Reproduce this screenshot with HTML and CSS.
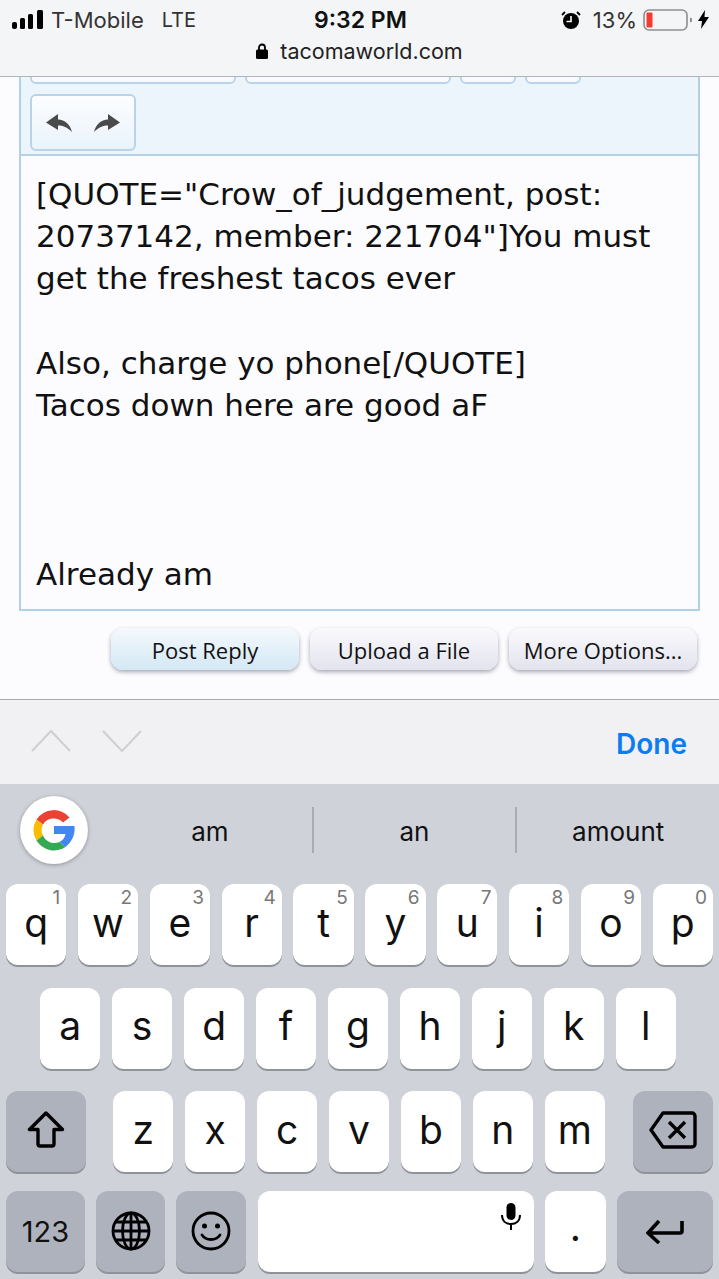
FILE: index.html
```html
<!DOCTYPE html>
<html lang="en">
<head>
  <meta charset="UTF-8">
  <meta name="viewport" content="width=device-width, initial-scale=1.0">
  <title>Post Reply - tacomaworld.com</title>
  <link rel="stylesheet" href="styles.css">
</head>
<body>
<div class="phone">
  <header class="top-bar">
    <div class="status-row">
      <div class="status-left">
        <svg class="signal" width="32" height="20" viewBox="0 0 32 20">
          <rect x="0" y="12" width="5" height="7" rx="2" fill="#000"/>
          <rect x="8" y="8" width="5" height="11" rx="1.5" fill="#000"/>
          <rect x="16" y="4" width="5" height="15" rx="1.5" fill="#000"/>
          <rect x="25" y="0" width="6" height="19" rx="1.5" fill="#000"/>
        </svg>
        <span class="carrier">T-Mobile</span>
        <span class="network">LTE</span>
      </div>
      <div class="clock">9:32 PM</div>
      <div class="status-right">
        <svg class="alarm" width="20" height="20" viewBox="0 0 20 20">
          <circle cx="10" cy="11" r="8" fill="#000"/>
          <path d="M10 6v5.5H5.5" fill="none" stroke="#fff" stroke-width="1.6"/>
          <path d="M1 5l3-3M19 5l-3-3" stroke="#000" stroke-width="1.8" fill="none"/>
        </svg>
        <span class="percent">13%</span>
        <svg class="battery" width="50" height="22" viewBox="0 0 50 22">
          <rect x="1" y="1" width="43" height="20" rx="5" fill="none" stroke="#8e8e8e" stroke-width="1.6"/>
          <rect x="3.5" y="3.5" width="6" height="15" rx="1" fill="#f63a30"/>
          <path d="M47 8.5l2 1v3l-2 1z" fill="#8e8e8e"/>
        </svg>
        <svg class="bolt" width="11" height="19" viewBox="0 0 11 19">
          <path d="M7 0L0 11h4l-1 8 8-12H6.500z" fill="#000"/>
        </svg>
      </div>
    </div>
    <div class="url-row">
      <svg class="lock" width="12" height="16" viewBox="0 0 12 16">
        <path d="M3 7V4.500a3 3 0 0 1 6 0V7" fill="none" stroke="#000" stroke-width="1.800"/>
        <rect x="0" y="6.500" width="12" height="9.500" rx="1.500" fill="#000"/>
      </svg>
      <span>tacomaworld.com</span>
    </div>
  </header>

  <main class="page">
    <div class="editor">
      <div class="toolbar">
        <div class="tool-row-clipped">
          <div class="tool-group group-wide"></div>
          <div class="tool-group group-wide"></div>
          <div class="tool-group group-small"></div>
          <div class="tool-group group-small"></div>
        </div>
        <div class="tool-group undo-group">
          <svg width="30" height="20" viewBox="0 0 30 20">
            <path d="M13 1L1 9.500 13 17v-4.500c5 0 9 1.500 14 6.500-2-8-7-12-14-12.500z" fill="#4a4a4a"/>
          </svg>
          <svg width="30" height="20" viewBox="0 0 30 20">
            <path d="M17 1l12 8.500L17 17v-4.500c-5 0-9 1.500-14 6.500 2-8 7-12 14-12.500z" fill="#4a4a4a"/>
          </svg>
        </div>
      </div>
      <div class="editor-text">[QUOTE="Crow_of_judgement, post:
20737142, member: 221704"]You must
get the freshest tacos ever

Also, charge yo phone[/QUOTE]
Tacos down here are good aF



Already am</div>
    </div>
    <div class="form-buttons">
      <div class="form-button primary">Post Reply</div>
      <div class="form-button">Upload a File</div>
      <div class="form-button">More Options...</div>
    </div>
  </main>

  <div class="accessory-bar">
    <div class="chevrons">
      <svg width="40" height="23" viewBox="0 0 40 23"><path d="M1 22L20 2l19 20" fill="none" stroke="#cfcfd2" stroke-width="2"/></svg>
      <svg width="40" height="23" viewBox="0 0 40 23"><path d="M1 2l19 20L39 2" fill="none" stroke="#cfcfd2" stroke-width="2"/></svg>
    </div>
    <div class="done">Done</div>
  </div>

  <section class="keyboard">
    <div class="suggestions">
      <div class="google-badge">
        <svg width="44" height="44" viewBox="0 0 44 44">
          <path d="M37.500 9.500A20.500 20.500 0 0 0 4.500 11.500l6.500 5a12.500 12.500 0 0 1 20-2z" fill="#ea4335"/>
          <path d="M4.500 11.500a20.500 20.500 0 0 0 0 21l6.500-5a12.500 12.500 0 0 1 0-11z" fill="#fbbc05"/>
          <path d="M4.500 32.500a20.500 20.500 0 0 0 29 6.500l-6-5a12.500 12.500 0 0 1-16.500-6.500z" fill="#34a853"/>
          <path d="M42.500 18H22v8h11.500a11 11 0 0 1-6 8l6 5c6-5 10-12 9-21z" fill="#4285f4"/>
        </svg>
      </div>
      <div class="suggestion">am</div>
      <div class="suggestion">an</div>
      <div class="suggestion">amount</div>
    </div>

    <div class="key-row">
      <div class="key">q<span class="hint">1</span></div>
      <div class="key">w<span class="hint">2</span></div>
      <div class="key">e<span class="hint">3</span></div>
      <div class="key">r<span class="hint">4</span></div>
      <div class="key">t<span class="hint">5</span></div>
      <div class="key">y<span class="hint">6</span></div>
      <div class="key">u<span class="hint">7</span></div>
      <div class="key">i<span class="hint">8</span></div>
      <div class="key">o<span class="hint">9</span></div>
      <div class="key">p<span class="hint">0</span></div>
    </div>

    <div class="key-row row-home">
      <div class="key">a</div>
      <div class="key">s</div>
      <div class="key">d</div>
      <div class="key">f</div>
      <div class="key">g</div>
      <div class="key">h</div>
      <div class="key">j</div>
      <div class="key">k</div>
      <div class="key">l</div>
    </div>

    <div class="key-row">
      <div class="key dark key-shift">
        <svg width="38" height="38" viewBox="0 0 38 38">
          <path d="M19 2L2.500 18.500H11V33a2 2 0 0 0 2 2h12a2 2 0 0 0 2-2V18.500h8.500z" fill="none" stroke="#000" stroke-width="3.400" stroke-linejoin="round"/>
        </svg>
      </div>
      <div class="key">z</div>
      <div class="key">x</div>
      <div class="key">c</div>
      <div class="key">v</div>
      <div class="key">b</div>
      <div class="key">n</div>
      <div class="key">m</div>
      <div class="key dark key-delete">
        <svg width="48" height="38" viewBox="0 0 48 38">
          <path d="M14 2h29a3 3 0 0 1 3 3v28a3 3 0 0 1-3 3H14L2 19z" fill="none" stroke="#000" stroke-width="3.400" stroke-linejoin="round"/>
          <path d="M20 11l16 16M36 11L20 27" fill="none" stroke="#000" stroke-width="3.400"/>
        </svg>
      </div>
    </div>

    <div class="key-row row-bottom">
      <div class="key dark key-123">123</div>
      <div class="key dark key-globe">
        <svg width="40" height="40" viewBox="0 0 40 40" fill="none" stroke="#000" stroke-width="2.800">
          <circle cx="20" cy="20" r="18"/>
          <ellipse cx="20" cy="20" rx="8.500" ry="18"/>
          <path d="M2 20h36M5 11h30M5 29h30M20 2v36"/>
        </svg>
      </div>
      <div class="key dark key-emoji">
        <svg width="40" height="40" viewBox="0 0 40 40">
          <circle cx="20" cy="20" r="18" fill="none" stroke="#000" stroke-width="2.800"/>
          <circle cx="13.500" cy="15" r="2.500" fill="#000"/>
          <circle cx="26.500" cy="15" r="2.500" fill="#000"/>
          <path d="M11 24c4 6 14 6 18 0" fill="none" stroke="#000" stroke-width="2.800" stroke-linecap="round"/>
        </svg>
      </div>
      <div class="key key-space">
        <svg class="mic" width="20" height="27" viewBox="0 0 20 27">
          <rect x="5.500" y="0" width="9" height="17" rx="4.500" fill="#000"/>
          <path d="M1 12c0 6 4 9 9 9s9-3 9-9M10 21v6" fill="none" stroke="#000" stroke-width="2"/>
        </svg>
      </div>
      <div class="key key-dot">.</div>
      <div class="key dark key-return">
        <svg width="38" height="26" viewBox="0 0 38 26">
          <path d="M36 3v10a2 2 0 0 1-2 2H4M13 3L2 15l11 10" fill="none" stroke="#000" stroke-width="3.600"/>
        </svg>
      </div>
    </div>
  </section>
</div>
</body>
</html>
```

FILE: styles.css
```css
* {
  box-sizing: border-box;
}

body {
  margin: 0;
  background: #fcfcff;
  color: #000;
  font-family: 'Inter', 'Liberation Sans', sans-serif;
}

.phone {
  width: 719px;
  height: 1279px;
  display: flex;
  flex-direction: column;
  overflow: hidden;
}

/* status bar + address */
.top-bar {
  height: 77px;
  flex: none;
  background: #f4f5f6;
  border-bottom: 1px solid #b4b4b6;
}

.status-row {
  height: 36px;
  padding: 3px 10px 0 12px;
  display: grid;
  grid-template-columns: 1fr auto 1fr;
  align-items: center;
  font-size: 22px;
  color: #333;
}

.status-left,
.status-right {
  display: flex;
  align-items: center;
}

.status-right {
  justify-content: flex-end;
}

.carrier {
  margin-left: 7px;
}

.network {
  margin-left: 18px;
  font-size: 20px;
}

.clock {
  font-size: 23px;
  font-weight: 600;
  color: #111;
}

.percent {
  margin: 0 6px 0 12px;
}

.bolt {
  margin-left: 5px;
}

.url-row {
  height: 30px;
  display: flex;
  justify-content: center;
  align-items: center;
  gap: 12px;
  font-size: 21.500px;
  color: #222;
}

/* forum editor */
.page {
  flex: 1;
  padding: 0 19px;
}

.editor {
  height: 534px;
  display: flex;
  flex-direction: column;
  border: solid #b0d0e6;
  border-width: 0 2px 2px;
}

.toolbar {
  height: 79px;
  flex: none;
  padding: 0 9px;
  background: #edf5fc;
  border-bottom: 2px solid #b3d2e8;
}

.tool-row-clipped {
  height: 7px;
  display: flex;
  align-items: flex-end;
  gap: 9px;
  margin-bottom: 10px;
  overflow: hidden;
}

.tool-group {
  height: 30px;
  flex: none;
  background: #f7fbff;
  border: 2px solid #b9d4e8;
  border-radius: 6px;
}

.group-wide {
  width: 206px;
}

.group-small {
  width: 56px;
}

.undo-group {
  width: 106px;
  height: 57px;
  display: flex;
  justify-content: center;
  align-items: center;
  gap: 16px;
  background: linear-gradient(to bottom, #fcfdff, #eaf3fb);
}

.editor-text {
  flex: 1;
  padding: 17px 15px 0;
  background: #fcfcff;
  font-family: 'DejaVu Sans', sans-serif;
  font-size: 31px;
  line-height: 42.200px;
  white-space: pre;
  color: #111;
}

.form-buttons {
  display: flex;
  justify-content: flex-end;
  gap: 11px;
  margin-top: 17px;
  padding-right: 3px;
}

.form-button {
  width: 188px;
  height: 42px;
  display: flex;
  justify-content: center;
  align-items: center;
  padding-top: 1px;
  border-radius: 12px;
  background: linear-gradient(to bottom, #fafafd, #e3e3ee);
  box-shadow: 0 2px 4px rgba(60, 60, 80, 0.45);
  font-family: 'Open Sans', sans-serif;
  font-size: 22px;
  color: #111;
}

.form-button.primary {
  background: linear-gradient(to bottom, #f5f9fd, #d3e8f5);
}

/* prev / next / done */
.accessory-bar {
  height: 85px;
  flex: none;
  display: flex;
  justify-content: space-between;
  align-items: center;
  padding: 4px 32px 0 31px;
  background: #f1f1f3;
  border-top: 1px solid #a9a9ab;
}

.chevrons {
  display: flex;
  gap: 31px;
  margin-bottom: 8px;
}

.done {
  font-size: 28px;
  font-weight: 600;
  color: #0b7cf2;
}

/* keyboard */
.keyboard {
  height: 495px;
  flex: none;
  background: #cfd2d9;
}

.suggestions {
  height: 100px;
  display: flex;
  align-items: flex-start;
  padding: 23px 0 0 108px;
  position: relative;
}

.google-badge {
  position: absolute;
  left: 20px;
  top: 12px;
  width: 68px;
  height: 68px;
  display: flex;
  justify-content: center;
  align-items: center;
  background: #fff;
  border-radius: 50%;
  box-shadow: 0 1px 4px rgba(0, 0, 0, 0.3);
}

.suggestion {
  width: 205px;
  height: 46px;
  display: flex;
  justify-content: center;
  align-items: center;
  padding-top: 2px;
  font-size: 26px;
  color: #111;
}

.suggestion:first-of-type {
  width: 204px;
}

.suggestion + .suggestion {
  border-left: 2px solid #a9acb3;
}

.key-row {
  height: 81px;
  display: flex;
  gap: 11.500px;
  padding: 0 6px;
  margin-bottom: 22.500px;
}

.row-home {
  padding: 0 43px 0 40px;
}

.row-bottom {
  gap: 11.200px;
  margin-top: -4px;
}

.key {
  flex: 1;
  position: relative;
  display: flex;
  justify-content: center;
  align-items: center;
  padding-bottom: 5px;
  background: #fff;
  border-radius: 12px;
  box-shadow: 0 2px 0 #8f9299;
  font-size: 39px;
  line-height: 1;
  color: #111;
}

.key.dark {
  padding-bottom: 0;
  background: #aeb2bd;
}

.hint {
  position: absolute;
  top: 4px;
  right: 6px;
  font-size: 19px;
  line-height: 1;
  color: #777;
}

.key.key-shift {
  flex: 0 0 80px;
  margin-right: 15.500px;
  padding-bottom: 4px;
}

.key.key-delete {
  flex: 0 0 80px;
  margin-left: 16.500px;
  padding-bottom: 4px;
}

.key-123 {
  flex: 0 0 79px;
  font-size: 29px;
}

.key-globe {
  flex: 0 0 69px;
}

.key-emoji {
  flex: 0 0 70px;
}

.key-space {
  flex: 0 0 276px;
}

.mic {
  position: absolute;
  right: 13px;
  top: 12px;
}

.key-dot {
  flex: 0 0 61px;
  padding-bottom: 9px;
}

.key-return {
  flex: 0 0 96px;
}
```
